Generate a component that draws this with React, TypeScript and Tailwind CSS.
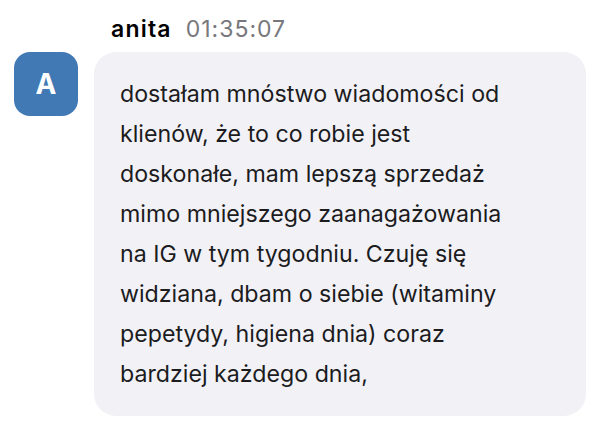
const lines = [
  "dostałam mnóstwo wiadomości od",
  "klienów, że to co robie jest",
  "doskonałe, mam lepszą sprzedaż",
  "mimo mniejszego zaanagażowania",
  "na IG w tym tygodniu. Czuję się",
  "widziana, dbam o siebie (witaminy",
  "pepetydy, higiena dnia) coraz",
  "bardziej każdego dnia,",
];

export default function App() {
  return (
    <div className="w-[608px] h-[440px] bg-white font-['Inter',sans-serif] text-[#1c1c1e]">
      <div className="flex pt-[12px] pl-[14px] gap-4">
        <div className="pt-[40px]">
          <div className="w-16 h-16 rounded-2xl bg-[#4179b5] flex items-center justify-center text-white text-[28px] font-bold">
            A
          </div>
        </div>
        <div className="flex flex-col">
          <div className="flex items-baseline gap-[14px] pl-[17px] h-[40px]">
            <span className="text-[23px] font-semibold text-black tracking-[1.2px]">anita</span>
            <span className="text-[23px] text-[#77777c] tracking-[1px]">01:35:07</span>
          </div>
          <div className="w-[492px] rounded-[22px] bg-[#f2f1f6] pl-[26px] pr-[30px] py-[22px] text-[23.2px] leading-[40px]">
            {lines.map((line, i) => (
              <div key={i} className="whitespace-nowrap">
                {line}
              </div>
            ))}
          </div>
        </div>
      </div>
    </div>
  );
}
